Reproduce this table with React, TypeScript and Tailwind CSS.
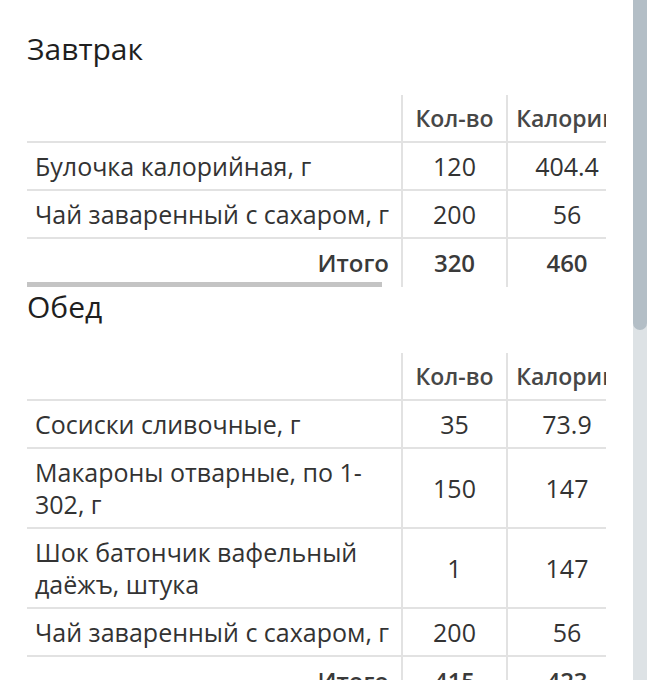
import React from "react";

type Row = { name: string; qty: string; kcal: string };

const meals: { title: string; rows: Row[]; qty: string; kcal: string; top: string }[] = [
  {
    title: "Завтрак",
    top: "pt-[31px]",
    rows: [
      { name: "Булочка калорийная, г", qty: "120", kcal: "404.4" },
      { name: "Чай заваренный с сахаром, г", qty: "200", kcal: "56" },
    ],
    qty: "320",
    kcal: "460",
  },
  {
    title: "Обед",
    top: "pt-[2px]",
    rows: [
      { name: "Сосиски сливочные, г", qty: "35", kcal: "73.9" },
      { name: "Макароны отварные, по 1-302, г", qty: "150", kcal: "147" },
      { name: "Шок батончик вафельный даёжъ, штука", qty: "1", kcal: "147" },
      { name: "Чай заваренный с сахаром, г", qty: "200", kcal: "56" },
    ],
    qty: "415",
    kcal: "423",
  },
];

const line = "border-[#e2e2e2]";

function MealTable({ title, rows, qty, kcal, top }: (typeof meals)[number]) {
  return (
    <section className={top}>
      <h2 className="text-[30px] leading-[36px] text-[#1f1f1f] mb-[28px]">{title}</h2>
      <div className="relative overflow-hidden">
        <table className="border-collapse table-fixed w-[944px] text-[25px] leading-[32px] text-[#333]">
          <colgroup>
            <col className="w-[375px]" />
            <col className="w-[105px]" />
            <col className="w-[120px]" />
            <col className="w-[115px]" />
            <col className="w-[115px]" />
            <col className="w-[114px]" />
          </colgroup>
          <thead>
            <tr className={`h-[47px] border-b-2 ${line} text-[23px] text-[#474747]`}>
              <th className={`border-r-2 ${line}`} />
              <th className={`font-semibold border-r-2 ${line}`}>Кол-во</th>
              <th className={`font-semibold border-r-2 ${line} whitespace-nowrap`}>Калории</th>
              <th className={`font-semibold border-r-2 ${line}`}>Белки</th>
              <th className={`font-semibold border-r-2 ${line}`}>Жиры</th>
              <th className="font-semibold">Углеводы</th>
            </tr>
          </thead>
          <tbody>
            {rows.map((r, i) => (
              <tr key={i} className={`border-b-2 ${line}`}>
                <td className={`px-2 py-[7px] border-r-2 ${line}`}>{r.name}</td>
                <td className={`text-center border-r-2 ${line}`}>{r.qty}</td>
                <td className={`text-center border-r-2 ${line}`}>{r.kcal}</td>
                <td className={`border-r-2 ${line}`} />
                <td className={`border-r-2 ${line}`} />
                <td />
              </tr>
            ))}
            <tr className="text-[24px] font-semibold text-[#3a3a3a]">
              <td className={`text-right pr-3 py-[8px] border-r-2 ${line}`}>Итого</td>
              <td className={`text-center border-r-2 ${line}`}>{qty}</td>
              <td className={`text-center border-r-2 ${line}`}>{kcal}</td>
              <td className={`border-r-2 ${line}`} />
              <td className={`border-r-2 ${line}`} />
              <td />
            </tr>
          </tbody>
        </table>
        <div className="absolute bottom-0 left-0 h-[5px] w-[355px] bg-[#c4c4c4]" />
      </div>
    </section>
  );
}

export default function App() {
  return (
    <div className="flex h-[680px] w-[647px] overflow-hidden bg-white font-['Open_Sans',sans-serif]">
      <main className="flex-1 min-w-0 px-[27px]">
        {meals.map((m) => (
          <MealTable key={m.title} {...m} />
        ))}
      </main>
      <div className="flex w-[14px] flex-col bg-[#dde2e5]">
        <div className="h-[330px] rounded-b-full bg-[#b3bec6]" />
      </div>
    </div>
  );
}
